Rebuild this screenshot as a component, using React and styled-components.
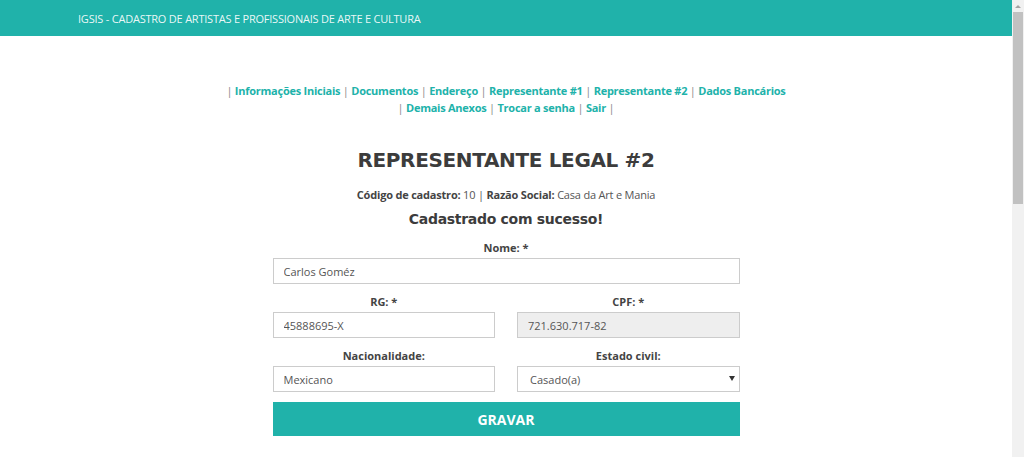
import React from "react";
import styled, { createGlobalStyle } from "styled-components";

const TEAL = "#20b2aa";

const Global = createGlobalStyle`
  html, body { margin: 0; padding: 0; background: #fff; }
  body { font-family: "Open Sans", "Liberation Sans", sans-serif; color: #444; }
`;

const Page = styled.div`
  margin-right: 12px;
  min-height: 1080px;
  display: flex;
  flex-direction: column;
`;

const ScrollTrack = styled.aside`
  position: fixed;
  top: 0;
  right: 0;
  width: 12px;
  height: 100vh;
  background: #f1f1f1;
  display: flex;
  flex-direction: column;
  align-items: center;
`;

const ScrollArrow = styled.div`
  height: 12px;
  width: 12px;
  display: flex;
  align-items: center;
  justify-content: center;
  &::before {
    content: "";
    border-left: 3px solid transparent;
    border-right: 3px solid transparent;
    border-bottom: 3px solid #a3a3a3;
  }
`;

const ScrollThumb = styled.div`
  width: 10px;
  height: 192px;
  background: #c1c1c1;
`;

const TopBar = styled.header`
  height: 36px;
  background: ${TEAL};
  display: flex;
  align-items: center;
  padding-left: 78px;
  color: rgba(255,255,255,0.92);
  font-size: 11px;
  letter-spacing: -0.22px;
`;

const Nav = styled.nav`
  margin: 46px 0 0;
  text-align: center;
  font-size: 11px;
  letter-spacing: -0.25px;
  font-weight: 700;
  line-height: 17px;
  color: #888;
`;

const NavLink = styled.a`
  color: ${TEAL};
  text-decoration: none;
`;

const Sep = styled.span`
  color: #888;
  font-weight: 400;
`;

const Title = styled.h1`
  margin: 31px 0 0;
  text-align: center;
  font-family: "DejaVu Sans", "Liberation Sans", sans-serif;
  font-weight: 700;
  font-size: 20px;
  letter-spacing: -0.35px;
  color: #3c3c3c;
  line-height: 26px;
`;

const Meta = styled.p`
  margin: 14px 0 0;
  text-align: center;
  font-size: 11px;
  letter-spacing: -0.2px;
  line-height: 16px;
  color: #555;
  b { color: #444; }
`;

const Success = styled.h2`
  margin: 6px 0 0;
  text-align: center;
  font-family: "DejaVu Sans", "Liberation Sans", sans-serif;
  font-weight: 700;
  font-size: 14px;
  letter-spacing: -0.3px;
  line-height: 20px;
  color: #3c3c3c;
`;

const Form = styled.form`
  width: 467px;
  margin: 11px auto 0;
  display: grid;
  grid-template-columns: 1fr 1fr;
  column-gap: 22px;
`;

const Field = styled.div`
  grid-column: ${(p) => (p.$full ? "1 / -1" : "auto")};
  display: flex;
  flex-direction: column;
  margin-bottom: 10px;
`;

const Label = styled.label`
  text-align: center;
  font-size: 11px;
  font-weight: 700;
  color: #444;
  line-height: 16px;
  margin-bottom: 2px;
`;

const Input = styled.input`
  box-sizing: border-box;
  height: 26px;
  border: 1px solid #ccc;
  background: ${(p) => (p.disabled ? "#eee" : "#fff")};
  padding: 0 10px;
  font-family: "Open Sans", "Liberation Sans", sans-serif;
  font-size: 11px;
  color: #555;
  outline: none;
  -webkit-text-fill-color: #555;
  opacity: 1;
`;

const SelectWrap = styled.div`
  position: relative;
  height: 26px;
`;

const Select = styled.select`
  box-sizing: border-box;
  width: 100%;
  height: 26px;
  border: 1px solid #ccc;
  background: #fff;
  padding: 0 10px 0 12px;
  font-family: "Open Sans", "Liberation Sans", sans-serif;
  font-size: 11px;
  color: #555;
  appearance: none;
  outline: none;
`;

const Caret = styled.span`
  position: absolute;
  right: 5px;
  top: 10px;
  width: 0;
  height: 0;
  border-left: 3px solid transparent;
  border-right: 3px solid transparent;
  border-top: 5px solid #333;
  pointer-events: none;
`;

const Submit = styled.button`
  grid-column: 1 / -1;
  height: 34px;
  margin-top: 0;
  border: none;
  background: ${TEAL};
  color: #fff;
  font-family: "Open Sans", "Liberation Sans", sans-serif;
  font-weight: 700;
  font-size: 14px;
  cursor: pointer;
`;

const links = [
  "Informações Iniciais",
  "Documentos",
  "Endereço",
  "Representante #1",
  "Representante #2",
  "Dados Bancários",
];
const links2 = ["Demais Anexos", "Trocar a senha", "Sair"];

export default function App() {
  return (
    <Page>
      <Global />
      <ScrollTrack>
        <ScrollArrow />
        <ScrollThumb />
      </ScrollTrack>
      <TopBar>IGSIS - CADASTRO DE ARTISTAS E PROFISSIONAIS DE ARTE E CULTURA</TopBar>
      <Nav>
        <Sep>|</Sep>
        {links.map((l, i) => (
          <React.Fragment key={l}>
            {" "}<NavLink href="#">{l}</NavLink>
            {i < links.length - 1 && <> <Sep>|</Sep></>}
          </React.Fragment>
        ))}
        <br />
        <Sep>|</Sep>
        {links2.map((l) => (
          <React.Fragment key={l}>
            {" "}<NavLink href="#">{l}</NavLink> <Sep>|</Sep>
          </React.Fragment>
        ))}
      </Nav>
      <Title>REPRESENTANTE LEGAL #2</Title>
      <Meta>
        <b>Código de cadastro:</b> 10 | <b>Razão Social:</b> Casa da Art e Mania
      </Meta>
      <Success>Cadastrado com sucesso!</Success>
      <Form onSubmit={(e) => e.preventDefault()}>
        <Field $full>
          <Label>Nome: *</Label>
          <Input defaultValue="Carlos Goméz" />
        </Field>
        <Field>
          <Label>RG: *</Label>
          <Input defaultValue="45888695-X" />
        </Field>
        <Field>
          <Label>CPF: *</Label>
          <Input defaultValue="721.630.717-82" disabled />
        </Field>
        <Field>
          <Label>Nacionalidade:</Label>
          <Input defaultValue="Mexicano" />
        </Field>
        <Field>
          <Label>Estado civil:</Label>
          <SelectWrap>
            <Select defaultValue="Casado(a)">
              <option>Solteiro(a)</option>
              <option>Casado(a)</option>
              <option>Divorciado(a)</option>
              <option>Viúvo(a)</option>
            </Select>
            <Caret />
          </SelectWrap>
        </Field>
        <Submit type="submit">GRAVAR</Submit>
      </Form>
    </Page>
  );
}
